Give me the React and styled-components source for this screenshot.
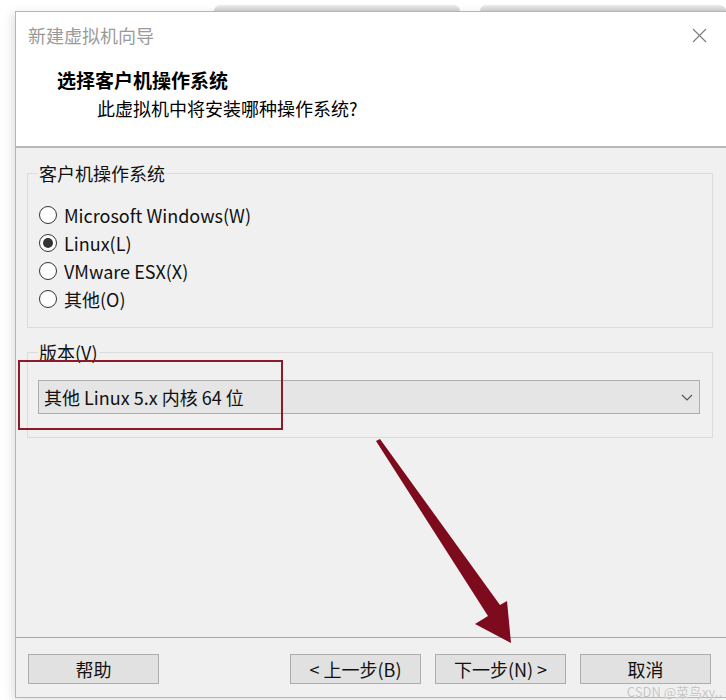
import React from 'react'
import styled, { createGlobalStyle } from 'styled-components'

const GlobalStyle = createGlobalStyle`
  html, body {
    margin: 0;
    padding: 0;
    background: #fff;
  }
  body {
    font-family: "Noto Sans CJK SC", "Noto Sans", sans-serif;
    color: #000;
  }
`

const osList = [
  { label: 'Microsoft Windows(W)', checked: false },
  { label: 'Linux(L)', checked: true },
  { label: 'VMware ESX(X)', checked: false },
  { label: '其他(O)', checked: false },
]

function CloseIcon() {
  return (
    <svg width="15" height="15" viewBox="0 0 15 15">
      <path d="M1 1 L14 14 M14 1 L1 14" stroke="#7a7a7a" strokeWidth="1.1" fill="none" />
    </svg>
  )
}

function Chevron() {
  return (
    <svg width="12" height="7" viewBox="0 0 12 7">
      <polyline points="1,1 6,6 11,1" stroke="#555" strokeWidth="1.2" fill="none" />
    </svg>
  )
}

function Arrow() {
  return (
    <ArrowLayer viewBox="0 0 726 700" width="726" height="700">
      <polygon
        points="376,441 380,439 500,605 507,601 511,643 475,624 488,616"
        fill="#7e0a1d"
      />
    </ArrowLayer>
  )
}

export default function App() {
  return (
    <>
      <GlobalStyle />
      <Page>
        <BackTabs>
          <BackTab $w={246} />
          <BackTab $w={246} />
        </BackTabs>
        <Window>
          <Header>
            <TitleBar>
              <span>新建虚拟机向导</span>
              <CloseIcon />
            </TitleBar>
            <Heading>选择客户机操作系统</Heading>
            <Subtitle>此虚拟机中将安装哪种操作系统?</Subtitle>
          </Header>
          <Body>
            <Group>
              <Legend>客户机操作系统</Legend>
              <RadioList>
                {osList.map((os) => (
                  <RadioRow key={os.label}>
                    <Radio $checked={os.checked} />
                    <span>{os.label}</span>
                  </RadioRow>
                ))}
              </RadioList>
            </Group>
            <Group $second>
              <Legend>版本(V)</Legend>
              <Select>
                <span>其他 Linux 5.x 内核 64 位</span>
                <Chevron />
              </Select>
            </Group>
          </Body>
          <Footer>
            <Button>帮助</Button>
            <Spacer />
            <Button>&lt; 上一步(B)</Button>
            <Button>下一步(N) &gt;</Button>
            <Button>取消</Button>
          </Footer>
        </Window>
        <Highlight />
        <Arrow />
        <Watermark>CSDN @菜鸟xy..</Watermark>
      </Page>
    </>
  )
}

const Page = styled.div`
  position: relative;
  width: 726px;
  height: 700px;
  overflow: hidden;
  background: #fff;
`

const BackTabs = styled.div`
  display: flex;
  align-items: flex-end;
  gap: 20px;
  height: 11px;
  padding-left: 214px;
`

const BackTab = styled.div`
  width: ${(p) => p.$w}px;
  height: 6px;
  border-radius: 6px 6px 0 0;
  background: linear-gradient(#ececec, #c9c9c9);
`

const Window = styled.div`
  box-sizing: border-box;
  margin-left: 15px;
  width: 711px;
  height: 687px;
  display: flex;
  flex-direction: column;
  border: 1px solid #b6b6b6;
  border-right: none;
  box-shadow: -3px 2px 9px rgba(0, 0, 0, 0.12);
  background: #f0f0f0;
`

const Header = styled.div`
  box-sizing: border-box;
  height: 136px;
  background: #fff;
  border-bottom: 2px solid #b9b9b9;
`

const TitleBar = styled.div`
  height: 46px;
  display: flex;
  align-items: center;
  justify-content: space-between;
  padding: 0 19px 0 12px;
  font-size: 18px;
  color: #9a9a9a;
`

const Heading = styled.div`
  margin-top: 9px;
  padding-left: 41px;
  font-size: 19px;
  line-height: 26px;
  font-weight: 700;
`

const Subtitle = styled.div`
  margin-top: 2px;
  padding-left: 81px;
  font-size: 18px;
  line-height: 26px;
`

const Body = styled.div`
  flex: 1;
  padding: 13px 13px 0 11px;
`

const Group = styled.fieldset`
  margin: ${(p) => (p.$second ? '12px' : '0')} 0 0;
  padding: 16px 12px ${(p) => (p.$second ? '23px' : '14px')} 10px;
  border: 1px solid #dcdcdc;
  min-width: 0;
`

const Legend = styled.legend`
  padding: 0 1px;
  font-size: 18px;
  line-height: 24px;
  color: #111;
`

const RadioList = styled.div`
  display: flex;
  flex-direction: column;
`

const RadioRow = styled.div`
  height: 28px;
  display: flex;
  align-items: center;
  gap: 7px;
  padding-left: 1px;
  font-size: 18px;
  color: #111;
`

const Radio = styled.span`
  box-sizing: border-box;
  width: 18px;
  height: 18px;
  border-radius: 50%;
  border: 1px solid #333;
  background: #fff;
  display: flex;
  align-items: center;
  justify-content: center;
  &::after {
    content: '';
    display: ${(p) => (p.$checked ? 'block' : 'none')};
    width: 10px;
    height: 10px;
    border-radius: 50%;
    background: #333;
  }
`

const Select = styled.div`
  box-sizing: border-box;
  height: 34px;
  display: flex;
  align-items: center;
  justify-content: space-between;
  padding: 0 6px 0 5px;
  background: #e5e5e5;
  border: 1px solid #adadad;
  font-size: 18px;
  color: #111;
`

const Footer = styled.div`
  box-sizing: border-box;
  height: 60px;
  display: flex;
  align-items: flex-start;
  gap: 14px;
  padding: 16px 15px 0 12px;
  border-top: 1px solid #a8a8a8;
`

const Spacer = styled.div`
  flex: 1;
`

const Button = styled.div`
  box-sizing: border-box;
  width: 131px;
  height: 30px;
  display: flex;
  align-items: center;
  justify-content: center;
  background: #e1e1e1;
  border: 1px solid #adadad;
  font-size: 18px;
  line-height: 20px;
  color: #111;
`

const Highlight = styled.div`
  position: absolute;
  left: 18px;
  top: 360px;
  width: 265px;
  height: 70px;
  box-sizing: border-box;
  border: 2px solid #8b1a2b;
`

const ArrowLayer = styled.svg`
  position: absolute;
  left: 0;
  top: 0;
  pointer-events: none;
`

const Watermark = styled.div`
  position: absolute;
  right: 4px;
  bottom: 1px;
  font-size: 13px;
  line-height: 14px;
  color: #c4c4c4;
  text-shadow: 0 0 1px #fff;
`
